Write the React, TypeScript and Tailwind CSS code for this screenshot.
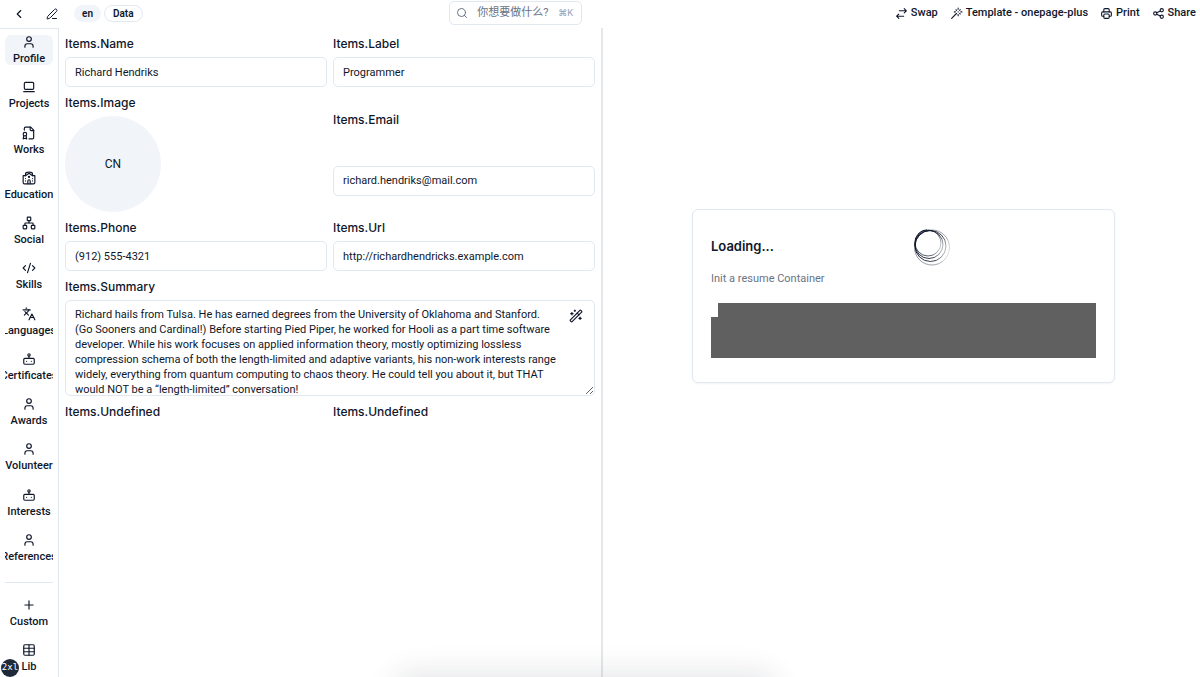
import type { ComponentType, ReactNode } from "react";
import {
  ChevronLeft,
  CodeXml,
  Languages,
  Network,
  PenLine,
  Plus,
  Search,
  Table,
  User,
  Wand,
  Wand2,
} from "lucide-react";

type IconProps = { className?: string };

function Svg({ className, children }: { className?: string; children: ReactNode }) {
  return (
    <svg
      viewBox="0 0 24 24"
      fill="none"
      stroke="currentColor"
      strokeWidth="2"
      strokeLinecap="round"
      strokeLinejoin="round"
      className={className}
    >
      {children}
    </svg>
  );
}

const Laptop = ({ className }: IconProps) => (
  <Svg className={className}>
    <rect x="4" y="4" width="16" height="12" rx="2" />
    <path d="M3 20h18" />
  </Svg>
);

const BadgeFile = ({ className }: IconProps) => (
  <Svg className={className}>
    <path d="M12 22h6a2 2 0 0 0 2-2V7l-5-5H6a2 2 0 0 0-2 2v3" />
    <path d="M14 2v4a2 2 0 0 0 2 2h4" />
    <circle cx="5" cy="14" r="3" />
    <path d="M7 16.5 8 22l-3-1-3 1 1-5.5" />
  </Svg>
);

const Campus = ({ className }: IconProps) => (
  <Svg className={className}>
    <circle cx="12" cy="10" r="1" />
    <path d="M22 20V8h-4l-6-4-6 4H2v12a2 2 0 0 0 2 2h16a2 2 0 0 0 2-2Z" />
    <path d="M6 17v.01M6 13v.01M18 17v.01M18 13v.01" />
    <path d="M14 22v-5a2 2 0 0 0-4 0v5" />
    <path d="M6 8V5a6 3 0 0 1 12 0v3" />
  </Svg>
);

const Robot = ({ className }: IconProps) => (
  <Svg className={className}>
    <rect x="3" y="11" width="18" height="10" rx="2" />
    <circle cx="12" cy="5" r="2" />
    <path d="M12 7v4M8 16v.01M16 16v.01" />
  </Svg>
);

const Swap = ({ className }: IconProps) => (
  <Svg className={className}>
    <path d="m17 3 4 4-4 4M8 7h13M7 13l-4 4 4 4M3 17h13" />
  </Svg>
);

const Printer = ({ className }: IconProps) => (
  <Svg className={className}>
    <path d="M17 17h2a2 2 0 0 0 2-2v-4a2 2 0 0 0-2-2H5a2 2 0 0 0-2 2v4a2 2 0 0 0 2 2h2" />
    <path d="M17 9V5a2 2 0 0 0-2-2H9a2 2 0 0 0-2 2v4" />
    <rect x="7" y="13" width="10" height="8" rx="2" />
  </Svg>
);

const Share = ({ className }: IconProps) => (
  <Svg className={className}>
    <circle cx="6" cy="12" r="3" />
    <circle cx="18" cy="6" r="3" />
    <circle cx="18" cy="18" r="3" />
    <path d="m8.7 10.7 6.6-3.4M8.7 13.3l6.6 3.4" />
  </Svg>
);

function Spinner() {
  return (
    <svg viewBox="0 0 36 40" fill="none" className="h-10 w-9" aria-label="Loading">
      <defs>
        <linearGradient id="ring" x1="0" y1="0.3" x2="1" y2="0.6">
          <stop offset="0" stopColor="#0f172a" />
          <stop offset="0.8" stopColor="#0f172a" stopOpacity="0.8" />
          <stop offset="1" stopColor="#0f172a" stopOpacity="0.3" />
        </linearGradient>
      </defs>
      <g stroke="url(#ring)">
        <circle cx="14" cy="16" r="13" strokeWidth="0.8" />
        <circle cx="15" cy="17.5" r="14" />
        <circle cx="16.5" cy="19" r="15.5" />
        <circle cx="18" cy="20.5" r="17.5" strokeWidth="0.8" opacity="0.6" />
      </g>
      <path d="M1 19C0 9 6 3 13 3" stroke="#0f172a" />
    </svg>
  );
}

const SECTIONS: { label: string; icon: ComponentType<IconProps> }[] = [
  { label: "Profile", icon: User },
  { label: "Projects", icon: Laptop },
  { label: "Works", icon: BadgeFile },
  { label: "Education", icon: Campus },
  { label: "Social", icon: Network },
  { label: "Skills", icon: CodeXml },
  { label: "Languages", icon: Languages },
  { label: "Certificates", icon: Robot },
  { label: "Awards", icon: User },
  { label: "Volunteer", icon: User },
  { label: "Interests", icon: Robot },
  { label: "References", icon: User },
];

const ACTIONS: { label: string; icon: ComponentType<IconProps> }[] = [
  { label: "Swap", icon: Swap },
  { label: "Template - onepage-plus", icon: Wand },
  { label: "Print", icon: Printer },
  { label: "Share", icon: Share },
];

const SUMMARY =
  "Richard hails from Tulsa. He has earned degrees from the University of Oklahoma and Stanford. (Go Sooners and Cardinal!) Before starting Pied Piper, he worked for Hooli as a part time software developer. While his work focuses on applied information theory, mostly optimizing lossless compression schema of both the length-limited and adaptive variants, his non-work interests range widely, everything from quantum computing to chaos theory. He could tell you about it, but THAT would NOT be a “length-limited” conversation!";

const labelClass = "font-['Inter',sans-serif] text-xs leading-5 font-medium";

function NavItem({
  label,
  icon: Icon,
  active = false,
}: {
  label: string;
  icon: ComponentType<IconProps>;
  active?: boolean;
}) {
  return (
    <button
      className={`flex h-[30px] w-full shrink-0 flex-col items-center overflow-x-clip rounded-md ${
        active ? "bg-slate-100" : ""
      }`}
    >
      <Icon className="h-3.5 w-3.5 shrink-0" />
      <span className="mt-1 text-[11px] leading-3 font-medium">{label}</span>
    </button>
  );
}

function Field({ id, label, value }: { id: string; label: string; value: string }) {
  return (
    <div className="grid items-center gap-[3px]">
      <label htmlFor={id} className={labelClass}>
        {label}
      </label>
      <input
        id={id}
        defaultValue={value}
        className="h-[30px] w-full min-w-0 rounded-[5px] border border-slate-200 px-[9px] text-[11px] outline-none"
      />
    </div>
  );
}

export default function App() {
  return (
    <div className="relative flex h-screen flex-col overflow-hidden bg-white font-['Roboto','Noto_Sans_CJK_SC',sans-serif] text-slate-900">
      <header className="flex h-7 shrink-0 items-start justify-between pr-1">
        <div className="flex h-[27px] items-center">
          <button aria-label="Back" className="ml-3">
            <ChevronLeft className="h-3.5 w-3.5" />
          </button>
          <button aria-label="Rename" className="ml-5">
            <PenLine className="h-3 w-3" />
          </button>
          <span className="ml-4 rounded-full bg-slate-100 px-2 text-[10px] leading-[17px] font-semibold">
            en
          </span>
          <span className="ml-[3px] rounded-full border border-slate-200 px-2 text-[10px] leading-[15px] font-semibold">
            Data
          </span>
        </div>
        <button className="mt-px mr-1.5 flex h-6 w-[133px] items-center rounded-[5px] border border-slate-200 pl-1.5 text-gray-500">
          <Search className="h-3 w-3" />
          <span className="ml-[9px] text-[11px]">你想要做什么?</span>
          <kbd className="ml-auto pr-2 font-['Inter','DejaVu_Sans',sans-serif] text-[9px] text-gray-400">⌘K</kbd>
        </button>
        <div className="flex h-[27px] items-center gap-3">
          {ACTIONS.map(({ label, icon: Icon }) => (
            <button key={label} className="flex items-center gap-[3px] text-[11px] font-medium">
              <Icon className="h-[13px] w-[13px]" />
              {label}
            </button>
          ))}
        </div>
      </header>

      <div className="flex min-h-0 flex-1">
        <aside className="w-[59px] shrink-0 border-t border-r border-slate-200 px-[5px] pt-1.5">
          <nav className="flex h-[528px] flex-col justify-between">
            {SECTIONS.map((s, i) => (
              <NavItem key={s.label} label={s.label} icon={s.icon} active={i === 0} />
            ))}
          </nav>
          <hr className="mt-[19px] border-slate-200" />
          <div className="mt-[15px] flex flex-col gap-[15px]">
            <NavItem label="Custom" icon={Plus} />
            <NavItem label="Lib" icon={Table} />
          </div>
        </aside>

        <main className="w-[544px] shrink-0 border-r-2 border-gray-200 p-1.5">
          <form className="grid grid-cols-2 gap-1.5">
            <Field id="name" label="Items.Name" value="Richard Hendriks" />
            <Field id="label" label="Items.Label" value="Programmer" />
            <div className="grid gap-[3px]">
              <span className={labelClass}>Items.Image</span>
              <div className="flex h-24 w-24 items-center justify-center rounded-full bg-slate-100 text-xs">
                CN
              </div>
            </div>
            <Field id="email" label="Items.Email" value="richard.hendriks@mail.com" />
            <Field id="phone" label="Items.Phone" value="(912) 555-4321" />
            <Field id="url" label="Items.Url" value="http://richardhendricks.example.com" />
            <div className="relative col-span-2 grid gap-[3px]">
              <label htmlFor="summary" className={labelClass}>
                Items.Summary
              </label>
              <textarea
                id="summary"
                defaultValue={SUMMARY}
                className="h-24 w-full overflow-hidden rounded-[5px] border border-slate-200 py-1.5 pr-9 pl-[9px] text-[11px] leading-[15px] outline-none"
              />
              <button type="button" aria-label="Improve" className="absolute top-8 right-3">
                <Wand2 className="h-3.5 w-3.5" />
              </button>
            </div>
            <span className={labelClass}>Items.Undefined</span>
            <span className={labelClass}>Items.Undefined</span>
          </form>
        </main>

        <section className="flex flex-1 items-start justify-center pt-[181px] pl-1">
          <div className="w-[423px] rounded-md border border-slate-200 px-[18px] pt-[17px] pb-6 shadow-xs">
            <div className="flex items-center">
              <h3 className="w-[203px] font-['Inter',sans-serif] text-[13px] font-semibold">Loading...</h3>
              <Spinner />
            </div>
            <p className="mt-1 text-[11px] leading-[15px] text-gray-500">Init a resume Container</p>
            {/* code placeholder, first line is indented */}
            <div className="mt-[17px]">
              <div className="ml-[7px] h-3.5 bg-[#606060]" />
              <div className="h-[41px] bg-[#606060]" />
            </div>
          </div>
        </section>
      </div>

      {/* glow of the dock that sits below the fold */}
      <div className="pointer-events-none absolute top-full left-[400px] h-10 w-[370px] rounded-lg shadow-[0_0_30px_4px_#1e293b1f]" />
      <div className="absolute bottom-0 left-px flex h-[18px] w-[18px] items-center justify-center rounded-full bg-gray-800 font-['DejaVu_Sans_Mono',monospace] text-[9px] text-white">
        2xl
      </div>
    </div>
  );
}
